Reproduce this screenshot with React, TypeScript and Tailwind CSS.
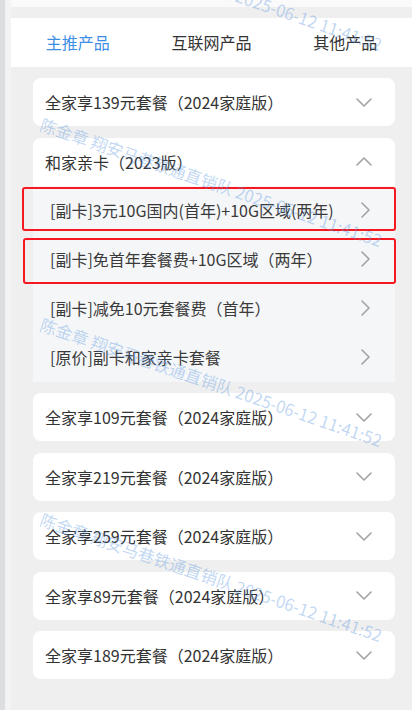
import React from 'react'

const font = { fontFamily: '"Noto Sans CJK SC", "Noto Sans", sans-serif' }

const tabs = ['主推产品', '互联网产品', '其他产品']

const subItems = [
  '[副卡]3元10G国内(首年)+10G区域(两年)',
  '[副卡]免首年套餐费+10G区域（两年）',
  '[副卡]减免10元套餐费（首年）',
  '[原价]副卡和家亲卡套餐',
]

const laterCards = [
  '全家享109元套餐（2024家庭版）',
  '全家享219元套餐（2024家庭版）',
  '全家享259元套餐（2024家庭版）',
  '全家享89元套餐（2024家庭版）',
  '全家享189元套餐（2024家庭版）',
]

const watermarkTops = [-84, 112, 312, 507, 704]

function ChevronDown() {
  return (
    <svg width="16" height="9" viewBox="0 0 16 9" fill="none" className="shrink-0">
      <polyline points="1,1 8,8 15,1" stroke="#a3a3a3" strokeWidth="1.6" strokeLinecap="round" strokeLinejoin="round" />
    </svg>
  )
}

function ChevronUp() {
  return (
    <svg width="16" height="9" viewBox="0 0 16 9" fill="none" className="shrink-0">
      <polyline points="1,8 8,1 15,8" stroke="#a3a3a3" strokeWidth="1.6" strokeLinecap="round" strokeLinejoin="round" />
    </svg>
  )
}

function ChevronRight() {
  return (
    <svg width="9" height="16" viewBox="0 0 9 16" fill="none" className="shrink-0">
      <polyline points="1,1 8,8 1,15" stroke="#a3a3a3" strokeWidth="1.6" strokeLinecap="round" strokeLinejoin="round" />
    </svg>
  )
}

function Card({ title }: { title: string }) {
  return (
    <div className="h-[48px] bg-white rounded-lg flex items-center justify-between pl-3 pr-[23px]">
      <span className="text-[16px] text-[#333]">{title}</span>
      <ChevronDown />
    </div>
  )
}

export default function App() {
  return (
    <div className="relative flex h-[710px] w-[412px] overflow-hidden bg-[#efefef]" style={font}>
      {/* left edge */}
      <div className="flex shrink-0">
        <div className="w-[5px] bg-[#dcdde0]" />
        <div className="w-[6px] bg-[#f3f3f5]" />
      </div>

      <div className="flex-1 flex flex-col">
        <div className="h-[7px] bg-[#fafafa]" />
        <div className="h-[11px] bg-[#efefef]" />

        {/* tabs */}
        <div className="h-[49px] bg-white grid grid-cols-3 items-center text-center text-[16px] pb-[2px]">
          {tabs.map((t, i) => (
            <span key={t} className={i === 0 ? 'text-[#3d8ee6]' : 'text-[#333]'}>
              {t}
            </span>
          ))}
        </div>

        {/* list */}
        <div className="flex flex-col gap-[11.5px] pt-[11px] pl-[22px] pr-[17px]">
          <Card title="全家享139元套餐（2024家庭版）" />

          <div className="flex flex-col">
            <div className="h-[48px] bg-white rounded-t-lg flex items-center justify-between pl-3 pr-[23px]">
              <span className="text-[16px] text-[#333]">和家亲卡（2023版）</span>
              <ChevronUp />
            </div>
            <div className="bg-[#f5f6f8] flex flex-col">
              {subItems.map((s, i) => (
                <div key={s} className="relative h-[49px] flex items-center justify-between pl-[17px] pr-[25px]">
                  <span className="text-[16px] text-[#3a3a3a]">{s}</span>
                  <ChevronRight />
                  {i === 0 && (
                    <div className="absolute left-[-11px] right-[-1px] top-[1px] bottom-[4px] border-2 border-[#f5191f] rounded-[3px]" />
                  )}
                  {i === 1 && (
                    <div className="absolute left-[-10px] right-[-1px] top-[3px] bottom-0 border-2 border-[#f5191f] rounded-[3px]" />
                  )}
                </div>
              ))}
            </div>
          </div>

          {laterCards.map((c) => (
            <Card key={c} title={c} />
          ))}
        </div>
      </div>

      {/* watermark */}
      <div className="pointer-events-none absolute inset-0">
        {watermarkTops.map((top) => (
          <div
            key={top}
            className="absolute left-[45px] origin-top-left rotate-[19deg] whitespace-nowrap text-[16.6px] text-[rgba(90,150,225,0.38)]"
            style={{ top }}
          >
            陈金章 翔安马巷铁通直销队 2025-06-12 11:41:52
          </div>
        ))}
      </div>
    </div>
  )
}
